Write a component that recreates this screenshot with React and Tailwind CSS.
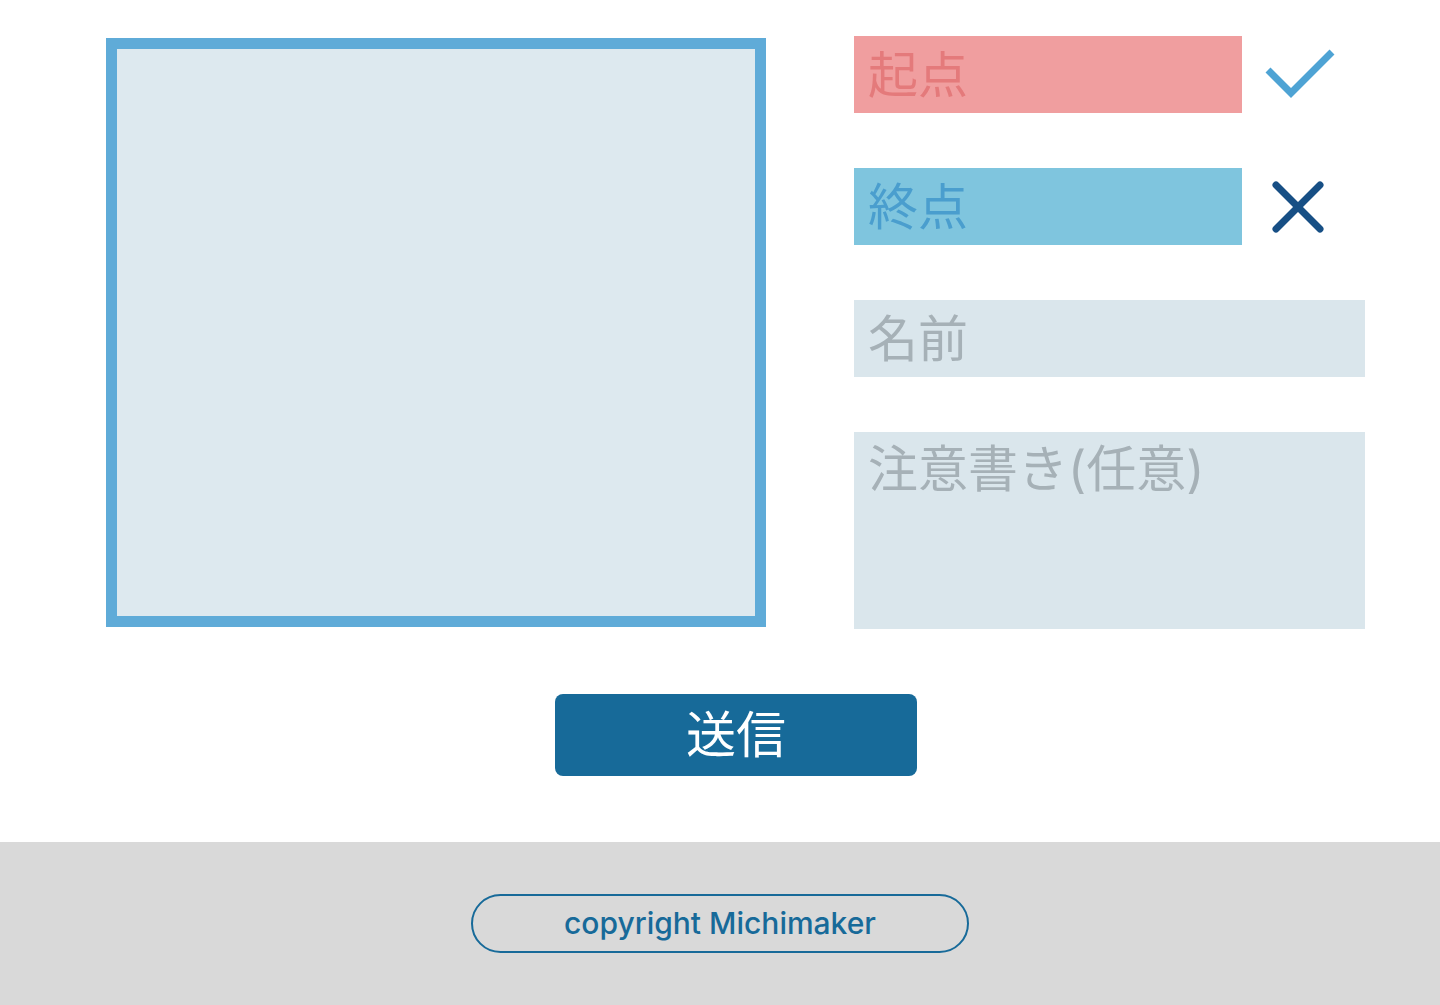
import React from 'react';

const font = { fontFamily: 'Inter, "Noto Sans CJK JP", sans-serif' };

const CheckIcon = () => (
  <svg width="72" height="56" viewBox="0 0 72 56" className="shrink-0">
    <polyline points="4,23 27,46 68,5" fill="none" stroke="#4ea3d4" strokeWidth="7" strokeLinecap="butt" strokeLinejoin="miter" />
  </svg>
);

const CrossIcon = () => (
  <svg width="56" height="56" viewBox="0 0 56 56" className="shrink-0">
    <line x1="6" y1="6" x2="50" y2="50" stroke="#174f85" strokeWidth="7" strokeLinecap="round" />
    <line x1="50" y1="6" x2="6" y2="50" stroke="#174f85" strokeWidth="7" strokeLinecap="round" />
  </svg>
);

export default function App() {
  return (
    <div className="min-h-[1005px] flex flex-col bg-white" style={font}>
      {/* Main form */}
      <main className="h-[842px] flex flex-col">
        <div className="flex items-start pl-[106px]">
          {/* Map area */}
          <div className="mt-[38px] w-[660px] h-[589px] border-[11px] border-[#5fabd8] bg-[#dde9ef]" />

          {/* Inputs */}
          <div className="ml-[88px] mt-[36px] flex flex-col gap-[55px] w-[511px]">
            <div className="flex items-center">
              <input
                readOnly
                placeholder="起点"
                className="w-[388px] h-[77px] bg-[#f09e9f] px-[14px] text-[50px] outline-none placeholder:text-[#e47a7b]"
              />
              <div className="ml-[22px] flex items-center">
                <CheckIcon />
              </div>
            </div>
            <div className="flex items-center">
              <input
                readOnly
                placeholder="終点"
                className="w-[388px] h-[77px] bg-[#7fc5de] px-[14px] text-[50px] outline-none placeholder:text-[#4a9ece]"
              />
              <div className="ml-[28px] flex items-center">
                <CrossIcon />
              </div>
            </div>
            <input
              readOnly
              placeholder="名前"
              className="w-[511px] h-[77px] bg-[#dae6ec] px-[14px] text-[50px] outline-none placeholder:text-[#a6b1b7]"
            />
            <textarea
              readOnly
              placeholder="注意書き(任意)"
              className="w-[511px] h-[197px] bg-[#dae6ec] px-[14px] pt-[2px] text-[50px] leading-[1.4] resize-none outline-none placeholder:text-[#a6b1b7]"
            />
          </div>
        </div>

        <div className="flex justify-center mt-[65px] pl-[32px]">
          <button className="w-[362px] h-[82px] rounded-[8px] bg-[#176a99] text-white text-[50px] leading-none">
            送信
          </button>
        </div>
      </main>

      {/* Footer */}
      <footer className="flex-1 bg-[#d9d9d9] flex justify-center pt-[52px]">
        <div className="w-[498px] h-[59px] rounded-full border-2 border-[#176a99] flex items-center justify-center text-[#176a99] text-[30px] font-medium">
          copyright Michimaker
        </div>
      </footer>
    </div>
  );
}
